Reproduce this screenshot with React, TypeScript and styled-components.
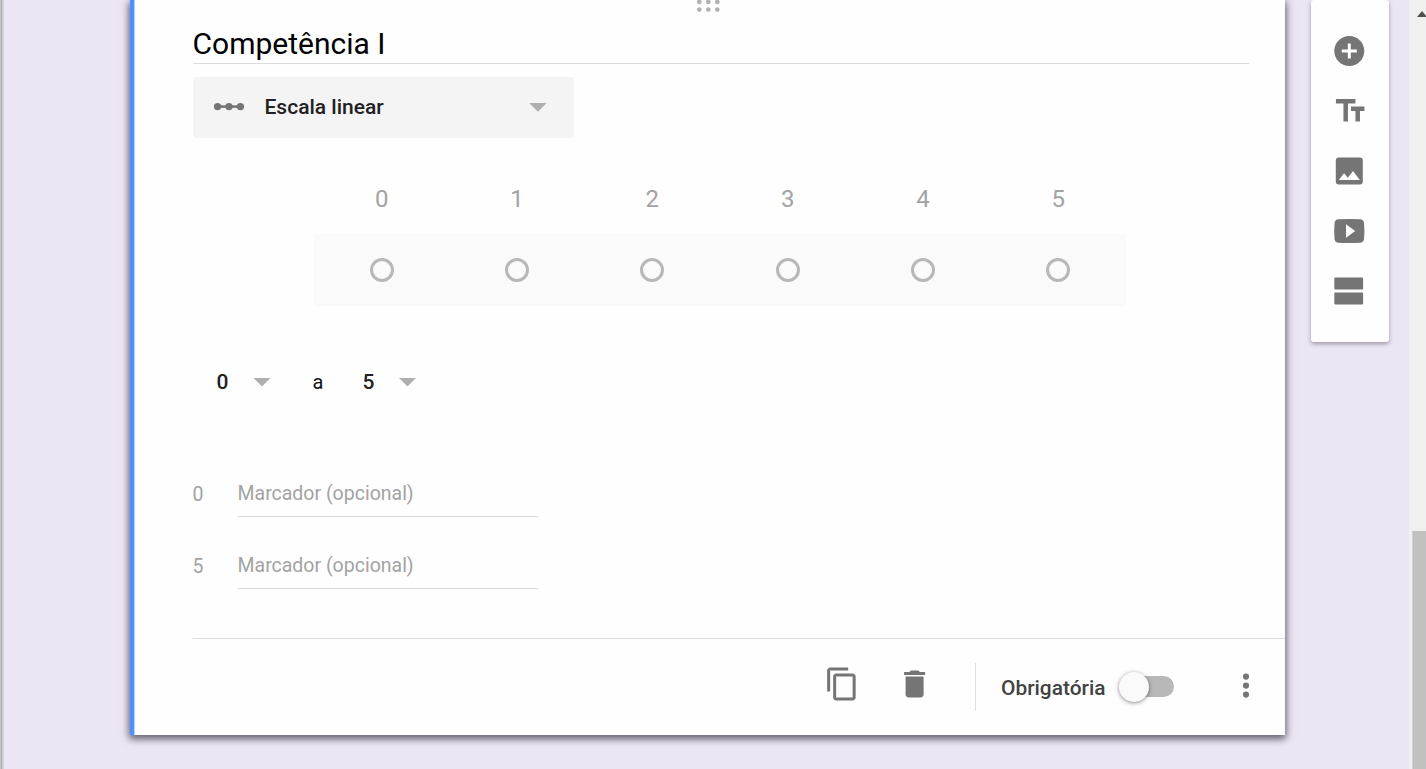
import React from "react";
import styled, { createGlobalStyle } from "styled-components";

const GlobalStyle = createGlobalStyle`
  * { box-sizing: border-box; }
  body { margin: 0; overflow: hidden; background: #ece6f4; font-family: Roboto, "Liberation Sans", sans-serif; }
`;

const Page = styled.div`
  display: flex;
  align-items: flex-start;
  width: 1426px;
  height: 769px;
  overflow: hidden;
  background: #ece6f4;
`;

const LeftEdge = styled.div`
  flex: none;
  width: 4px;
  height: 769px;
  background: #d5d2d8;
  border-left: 1px solid #cbcbcb;
  box-shadow: inset 1px 0 0 #a6a6a6;
`;

const Card = styled.main`
  flex: none;
  display: flex;
  flex-direction: column;
  width: 1155px;
  height: 735px;
  margin-left: 126px;
  padding-left: 58.5px;
  border-left: 4.5px solid #4d90fe;
  background: #fefefe;
  box-shadow: inset 1px 0 0 #b9d3fd, 0 4px 7px rgba(0, 0, 0, 0.3), 0 2px 8px 1px rgba(40, 30, 60, 0.5);
`;

const Header = styled.header`
  display: flex;
  flex-direction: column;
  width: 1056px;
  height: 64px;
  border-bottom: 1px solid #dcdcdc;
`;

const DragHandle = styled.svg`
  display: block;
  flex: none;
  width: 24px;
  height: 14px;
  margin-left: 503px;
`;

const Title = styled.h1`
  margin: 12px 0 0;
  font-size: 30px;
  line-height: 36px;
  font-weight: 400;
  color: #000;
  white-space: nowrap;
`;

const TypeSelect = styled.div`
  display: flex;
  align-items: center;
  width: 381px;
  height: 60.5px;
  margin-top: 13px;
  padding: 0 26.5px 0 18px;
  border-radius: 4px;
  background: #f4f4f4;
`;

const TypeName = styled.span`
  flex: 1;
  margin-left: 18px;
  font-size: 21px;
  font-weight: 500;
  color: #212121;
`;

const Caret = styled.i<{ $gap?: number }>`
  width: 18px;
  height: 9px;
  margin-left: ${(p) => p.$gap ?? 0}px;
  background: #afafaf;
  clip-path: polygon(0 0, 100% 0, 50% 100%);
`;

const Scale = styled.section`
  width: 812px;
  margin: 37px 0 0 121.5px;
`;

const ScaleRow = styled.div<{ $filled?: boolean }>`
  display: grid;
  grid-template-columns: repeat(6, 1fr);
  place-items: center;
  height: ${(p) => (p.$filled ? 72 : 59.5)}px;
  padding-bottom: ${(p) => (p.$filled ? 0 : 10)}px;
  background: ${(p) => (p.$filled ? "#fafafa" : "transparent")};
  font-size: 24px;
  color: #a3a3a3;
`;

const Radio = styled.span`
  width: 24px;
  height: 24px;
  border: 3px solid #b8b8b8;
  border-radius: 50%;
`;

const Range = styled.section`
  display: flex;
  align-items: center;
  height: 40px;
  margin-top: 56px;
  padding-left: 24px;
  font-size: 20px;
  color: #111;
`;

const Bound = styled.span`
  width: 12px;
  font-size: 21px;
  font-weight: 500;
  color: #212121;
`;

const Joiner = styled.span`
  width: 11px;
  margin: 0 39px 0 41.5px;
`;

const Markers = styled.section`
  display: flex;
  flex-direction: column;
  gap: 27px;
  margin-top: 69.5px;
`;

const Marker = styled.label`
  display: flex;
  align-items: center;
  height: 45px;
  font-size: 19.5px;
  color: #a3a3a3;
`;

const MarkerValue = styled.span`
  width: 45px;
`;

const MarkerField = styled.span`
  width: 300px;
  height: 45px;
  line-height: 43px;
  border-bottom: 1px solid #dadada;
`;

const Footer = styled.footer`
  display: flex;
  align-items: center;
  justify-content: flex-end;
  height: 97.5px;
  margin-top: auto;
  padding-right: 21px;
  border-top: 1.5px solid #dedede;
`;

const Icon = styled.svg<{ $gap?: number; $lift?: number }>`
  display: block;
  flex: none;
  width: 36px;
  height: 36px;
  margin-right: ${(p) => p.$gap ?? 0}px;
  margin-bottom: ${(p) => p.$lift ?? 0}px;
  fill: #757575;
`;

const Divider = styled.span`
  width: 1.5px;
  height: 48px;
  margin-right: 25px;
  background: #e0e0e0;
`;

const Required = styled.span`
  width: 104px;
  padding-top: 2px;
  font-size: 20.9px;
  font-weight: 500;
  color: #424242;
  white-space: nowrap;
`;

const Toggle = styled.span`
  display: flex;
  align-items: center;
  width: 55px;
  height: 21px;
  margin: 0 54px 0 14px;
  border-radius: 11px;
  background: linear-gradient(to right, transparent 12px, #b8b8b8 12px);
`;

const Knob = styled.span`
  flex: none;
  width: 30px;
  height: 30px;
  margin-left: -0.5px;
  border-radius: 50%;
  background: #fafafa;
  box-shadow: 0 1px 4px rgba(0, 0, 0, 0.45);
`;

const Toolbar = styled.nav`
  flex: none;
  display: flex;
  flex-direction: column;
  align-items: center;
  gap: 24px;
  width: 78px;
  height: 342px;
  margin-left: 25.5px;
  padding: 33px 1px 0 0;
  border-radius: 3px;
  background: #fefefe;
  box-shadow: 0 2px 4px rgba(40, 30, 60, 0.4);
`;

const Scrollbar = styled.aside`
  flex: none;
  width: 17px;
  height: 769px;
  margin-left: auto;
  background: #f0f0f0;
`;

const ScrollArrow = styled.svg`
  display: block;
  width: 17px;
  height: 531px;
`;

const ScrollThumb = styled.div`
  height: 238px;
  margin-left: 3px;
  background: #c1c1c1;
  border-left: 1px solid #d1d1d1;
`;

const values = [0, 1, 2, 3, 4, 5];

export default function App() {
  return (
    <Page>
      <GlobalStyle />
      <LeftEdge />
      <Card>
        <Header>
          <DragHandle viewBox="0 0 24 14" fill="#b0b0b0">
            {[3.3, 12.3, 21.3].map((x) => (
              <React.Fragment key={x}>
                <circle cx={x} cy="2" r="2.3" />
                <circle cx={x} cy="9.6" r="2.3" />
              </React.Fragment>
            ))}
          </DragHandle>
          <Title>Competência I</Title>
        </Header>
        <TypeSelect>
          <Icon viewBox="0 0.4 36 36" $lift={1}>
            <path d="M6 16.700h24v2.600H6z" />
            <circle cx="6.6" cy="18" r="3.7" />
            <circle cx="18" cy="18" r="3.7" />
            <circle cx="29.4" cy="18" r="3.7" />
          </Icon>
          <TypeName>Escala linear</TypeName>
          <Caret />
        </TypeSelect>
        <Scale>
          <ScaleRow>{values.map((v) => <span key={v}>{v}</span>)}</ScaleRow>
          <ScaleRow $filled>{values.map((v) => <Radio key={v} />)}</ScaleRow>
        </Scale>
        <Range>
          <Bound>0</Bound>
          <Caret $gap={24.5} />
          <Joiner>a</Joiner>
          <Bound>5</Bound>
          <Caret $gap={24} />
        </Range>
        <Markers>
          {[0, 5].map((v) => (
            <Marker key={v}>
              <MarkerValue>{v}</MarkerValue>
              <MarkerField>Marcador (opcional)</MarkerField>
            </Marker>
          ))}
        </Markers>
        <Footer>
          <Icon viewBox="-0.1 0 24 24" $gap={36.5} $lift={6}>
            <path d="M16 1H4c-1.1 0-2 .9-2 2v14h2V3h12V1zm3 4H8c-1.1 0-2 .9-2 2v14c0 1.1.9 2 2 2h11c1.1 0 2-.9 2-2V7c0-1.1-.9-2-2-2zm0 16H8V7h11v14z" />
          </Icon>
          <Icon viewBox="-0.4 0 24 24" $gap={42.5} $lift={6}>
            <path d="M6 19c0 1.1.9 2 2 2h8c1.1 0 2-.9 2-2V7H6v12zM19 4h-3.500l-1-1h-5l-1 1H5v2h14V4z" />
          </Icon>
          <Divider />
          <Required>Obrigatória</Required>
          <Toggle><Knob /></Toggle>
          <Icon viewBox="0 0.3 24 24" $lift={2}>
            <circle cx="12" cy="6" r="2.05" />
            <circle cx="12" cy="12" r="2.05" />
            <circle cx="12" cy="18" r="2.05" />
          </Icon>
        </Footer>
      </Card>
      <Toolbar>
        <Icon viewBox="-0.2 0 24 24">
          <path d="M12 2C6.480 2 2 6.480 2 12s4.480 10 10 10 10-4.480 10-10S17.520 2 12 2zm5 11h-4v4h-2v-4H7v-2h4V7h2v4h4v2z" />
        </Icon>
        <Icon viewBox="-0.800 0 24 24">
          <path d="M2.500 4v3h5v12h3V7h5V4h-13zm19 5h-9v3h3v7h3v-7h3V9z" />
        </Icon>
        <Icon viewBox="-0.2 0 24 24">
          <path d="M5 3h14a2 2 0 0 1 2 2v14a2 2 0 0 1-2 2H5a2 2 0 0 1-2-2V5a2 2 0 0 1 2-2zM5 18h14l-4.500-6-3.500 4.510-2.500-3.010z" fillRule="evenodd" />
        </Icon>
        <Icon viewBox="-0.3 0 36 36">
          <path fillRule="evenodd" d="M7 6.200Q18 5.600 29 6.200Q32 6.400 32.700 9.500Q33.600 18 32.700 26.500Q32 29.600 29 29.800Q18 30.400 7 29.800Q4 29.600 3.300 26.500Q2.400 18 3.300 9.500Q4 6.400 7 6.200zM14.700 11.200v13.600l9.200-6.800z" />
        </Icon>
        <Icon viewBox="-0.3 0 36 36">
          <rect x="3" y="4.500" width="28.800" height="12" rx="1" />
          <rect x="3" y="19.400" width="28.800" height="12.200" rx="1" />
        </Icon>
      </Toolbar>
      <Scrollbar>
        <ScrollArrow viewBox="0 0 17 531">
          <path d="M8 17l5-6 5 6z" fill="#505050" />
        </ScrollArrow>
        <ScrollThumb />
      </Scrollbar>
    </Page>
  );
}
